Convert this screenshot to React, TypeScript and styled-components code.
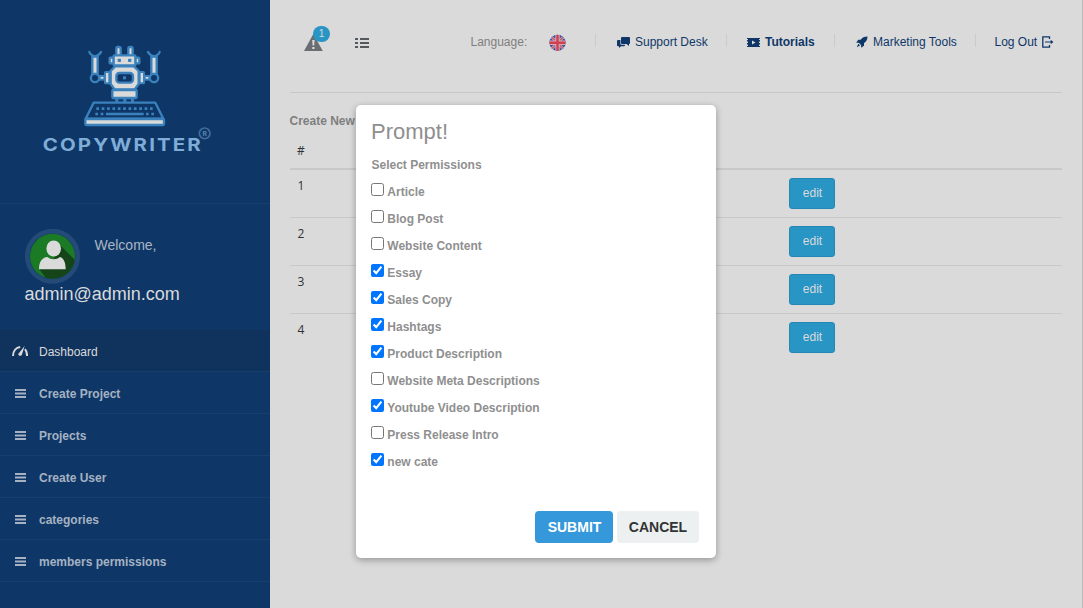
import React from 'react';
import styled, { createGlobalStyle, css } from 'styled-components';

const GlobalStyle = createGlobalStyle`
  * { box-sizing: border-box; }
  body {
    margin: 0;
    overflow: hidden;
    background: #dadada;
    font-family: "Liberation Sans", Arial, sans-serif;
    font-size: 12px;
    color: #7f7f7f;
  }
`;

const Page = styled.div`
  display: flex;
  width: 1083px;
  height: 608px;
  position: relative;
  background: #dadada;
  border-right: 1px solid #bcbcbc;
`;

const Sidebar = styled.aside`
  width: 270px;
  flex: none;
  background: #0e3768;
  display: flex;
  flex-direction: column;
`;

const LogoArea = styled.div`
  height: 204px;
  padding: 30px 0 0 30px;
  border-bottom: 1px solid #163f6e;
`;

const Profile = styled.section`
  height: 126px;
  padding: 25px 0 0 24px;
`;

const ProfileTop = styled.div`
  display: flex;
  height: 55px;
`;

const Avatar = styled.div`
  width: 57px;
  height: 57px;
`;

const Welcome = styled.span`
  margin: 8px 0 0 13.5px;
  font-size: 14px;
  line-height: 16px;
  color: #aab5c2;
`;

const Email = styled.div`
  padding-left: 0.5px;
  font-size: 18px;
  line-height: 20px;
  color: #dadada;
`;

const Nav = styled.nav`
  display: flex;
  flex-direction: column;
`;

const NavItem = styled.a<{ $active?: boolean }>`
  display: flex;
  align-items: center;
  height: 42px;
  padding: 2px 0 0 12px;
  border-bottom: 1px solid #163f6e;
  font-weight: 700;
  color: #a6b2c1;
  ${p => p.$active && css`
    background: #10335e;
    font-weight: 400;
    color: #dadada;
  `}
`;

const NavIcon = styled.span`
  display: flex;
  width: 27px;
  padding-bottom: 1px;
`;

const Content = styled.main`
  flex: 1;
  padding: 0 20px;
`;

const TopBar = styled.header`
  display: flex;
  justify-content: space-between;
  height: 93px;
  border-bottom: 1px solid #c8c8c8;
`;

const Tools = styled.div`
  display: flex;
  padding: 26px 0 0 14px;
`;

const AlertButton = styled.div`
  position: relative;
  width: 51px;
  height: 26px;
  padding-top: 8px;
`;

const Badge = styled.span`
  position: absolute;
  left: 9px;
  top: 0;
  width: 17px;
  height: 16px;
  border-radius: 8px;
  background: #2895c5;
  color: #dadada;
  font-size: 10px;
  line-height: 16px;
  text-align: center;
`;

const ListButton = styled.div`
  padding-top: 11px;
`;

const Links = styled.div`
  display: flex;
  padding: 34px 7px 0 0;
  height: 60px;
`;

const Language = styled.div`
  display: flex;
  width: 124.5px;
  justify-content: space-between;
  padding-right: 29px;
  line-height: 16px;
`;

const TopLink = styled.a<{ $width: number; $strong?: boolean; $indent?: number }>`
  display: flex;
  align-items: center;
  width: ${p => p.$width}px;
  height: 13px;
  border-left: 1px solid #cbcbcb;
  padding: 3px 0 0 ${p => p.$indent ?? 20}px;
  color: #0e3768;
  white-space: nowrap;
  font-weight: ${p => (p.$strong ? 700 : 400)};
  svg { flex: none; margin-right: 5px; }
`;

const LogOut = styled(TopLink)`
  svg { margin: 0 0 0 5px; }
`;

const Caption = styled.div`
  margin: 20px 0 0 -0.5px;
  height: 22px;
  line-height: 16px;
  font-weight: 700;
  font-size: 12px;
`;

const Table = styled.div`
  font-family: "Open Sans", sans-serif;
  font-size: 12px;
  color: #2f3338;
`;

const TableHead = styled.div`
  height: 35px;
  padding: 7px 7px;
  line-height: 18px;
  border-bottom: 2px solid #c8c8c8;
`;

const TableRow = styled.div`
  display: flex;
  justify-content: space-between;
  padding: 8px 227px 8px 7.5px;
  line-height: 16px;
  & + & { border-top: 1px solid #c8c8c8; }
`;

const EditButton = styled.button`
  width: 46px;
  height: 31px;
  padding: 0 0 2px 1px;
  border: 1px solid #2587b3;
  border-radius: 3px;
  background: #2895c5;
  color: #dadada;
  font: 12px "Liberation Sans", Arial, sans-serif;
`;

const Dialog = styled.div`
  position: absolute;
  left: 356px;
  top: 105px;
  width: 360px;
  height: 453px;
  border-radius: 5px;
  background: #fff;
  box-shadow: 0 2px 7px rgba(0, 0, 0, 0.33);
  padding: 14px 17px 15px 15px;
  display: flex;
  flex-direction: column;
  color: #8f8f8f;
`;

const DialogTitle = styled.h3`
  margin: 0;
  font-size: 22px;
  font-weight: 400;
  line-height: 25px;
`;

const DialogHint = styled.div`
  padding: 13px 0 0 0.5px;
  height: 32px;
  font-weight: 700;
  line-height: 16px;
`;

const Option = styled.label`
  display: flex;
  height: 27px;
  padding-top: 7px;
  font-weight: 700;
`;

const Check = styled.input`
  width: 13px;
  height: 13px;
  margin: 0 3.3px 0 0;
`;

const OptionText = styled.span`
  margin-top: 1px;
  line-height: 16px;
`;

const Actions = styled.div`
  display: flex;
  justify-content: flex-end;
  gap: 4px;
  margin-top: auto;
`;

const ActionButton = styled.button<{ $primary?: boolean }>`
  width: ${p => (p.$primary ? 78 : 82)}px;
  height: 32px;
  padding: 0 0 0 ${p => (p.$primary ? 1 : 0)}px;
  border: 0;
  border-radius: 4px;
  background: ${p => (p.$primary ? '#3498db' : '#ecf0f1')};
  color: ${p => (p.$primary ? '#fff' : '#333')};
  font: 700 14px "Liberation Sans", Arial, sans-serif;
`;

const blue = '#3b82bd';
const pale = '#dadada';

const Arm = () => (
  <g>
    <path d="M178 66Q181 75 195 79Q209 75 213 66" fill="none" stroke={blue} strokeWidth="7" strokeLinecap="round" />
    <rect x="187" y="80" width="16" height="52" fill={pale} stroke={blue} strokeWidth="7" />
    <circle cx="195" cy="144" r="12.5" fill="#0e3768" stroke={blue} strokeWidth="7" />
    <rect x="209" y="138" width="14" height="11" fill={pale} stroke={blue} strokeWidth="6" />
    <rect x="225" y="126" width="13" height="34" rx="2" fill={pale} stroke={blue} strokeWidth="6" />
  </g>
);

const Logo = () => (
  <svg width="200" height="140" viewBox="0 0 600 420">
    <Arm />
    <g transform="translate(567 0) scale(-1 1)"><Arm /></g>
    <g fill={pale} stroke={blue} strokeWidth="7">
      <rect x="259" y="51" width="13" height="26" rx="5" />
      <rect x="295" y="51" width="13" height="26" rx="5" />
      <rect x="239" y="83" width="12" height="17" rx="2" />
      <rect x="316" y="83" width="12" height="17" rx="2" />
      <rect x="251" y="76" width="65" height="30" rx="2" />
      <path d="M255 109H312L326 123V162L314 178H254L242 162V123Z" />
      <rect x="247" y="180" width="73" height="24" rx="2" />
    </g>
    <rect x="259" y="129" width="50" height="29" rx="9" fill="#0e3768" stroke={blue} strokeWidth="7" />
    <g fill={blue}>
      <rect x="263" y="86" width="10" height="10" rx="2" />
      <rect x="294" y="86" width="10" height="10" rx="2" />
      <rect x="279" y="139" width="9" height="9" />
      <rect x="256" y="205" width="9" height="14" />
      <rect x="280" y="205" width="9" height="14" />
      <rect x="303" y="205" width="9" height="14" />
    </g>
    <path d="M191 218H376L400 266H167Z" fill="none" stroke={blue} strokeWidth="7" strokeLinejoin="round" />
    <rect x="166" y="267" width="236" height="18" rx="3" fill={pale} stroke={blue} strokeWidth="7" />
    <path d="M199 236H370" stroke={blue} strokeWidth="8" strokeDasharray="8 8.1" />
    <path d="M196 252H220M348 252H374" stroke={blue} strokeWidth="8" strokeDasharray="8 8" />
    <path d="M228 252H341" stroke={blue} strokeWidth="8" />
    <g transform="translate(38 362) scale(1.18 1)">
      <text textLength="402" lengthAdjust="spacing" fontFamily="Inter, sans-serif" fontSize="52" fontWeight="700" fill="#7fadd8">COPYWRITER</text>
    </g>
    <circle cx="524" cy="310" r="16" fill="none" stroke="#426c9b" strokeWidth="5" />
    <text x="524" y="317" textAnchor="middle" fontFamily="Inter, sans-serif" fontSize="20" fontWeight="700" fill="#5a84b1">R</text>
  </svg>
);

const AvatarIcon = () => (
  <svg width="57" height="57" viewBox="0 0 57 57">
    <defs><clipPath id="disc"><circle cx="28.5" cy="27.3" r="22.5" /></clipPath></defs>
    <circle cx="28.5" cy="27.3" r="25.2" fill="none" stroke="#244a77" strokeWidth="4.6" />
    <g clipPath="url(#disc)">
      <rect width="57" height="57" fill="#1b7a24" />
      <path d="M35 15L57 37V57H28L15 40L30 30Z" fill="#144418" />
      <ellipse cx="29.7" cy="19.5" rx="7.3" ry="8" fill="#dadada" />
      <path d="M15 40.2C15 33 18 28.5 23.5 28C27 31 32 31 36 28C40 29 41.7 34 41.7 40.2Z" fill="#dadada" />
    </g>
  </svg>
);

const GaugeIcon = () => (
  <svg width="16" height="12" viewBox="0 0 16 12">
    <path d="M1 11C1 6 4 2.4 8.2 1.9M13 4.2C14.5 6 15.1 8.3 15.1 11" fill="none" stroke="#dadada" strokeWidth="2" />
    <path d="M12.6 1L10 9.6C9.4 11.4 6.7 11.2 6.4 9.4C6.3 8.5 6.8 7.9 7.4 7.4Z" fill="#dadada" />
  </svg>
);

const BarsIcon = () => (
  <svg width="14" height="9" viewBox="0 0 14 9">
    <path d="M3 1H14M3 4.5H14M3 8H14" stroke="#a6b2c1" strokeWidth="2" />
  </svg>
);

const WarningIcon = () => (
  <svg width="19" height="17" viewBox="0 0 19 17">
    <path d="M9.3 0L18.8 17H0Z" fill="#6a6e73" />
    <path d="M8.2 6H10.6L10.2 11.5H8.6ZM8.3 13H10.5V15H8.3Z" fill="#dadada" />
  </svg>
);

const ListIcon = () => (
  <svg width="14" height="10" viewBox="0 0 14 10">
    <path d="M0 1H3M0 5H3M0 9H3M5 1H14M5 5H14M5 9H14" stroke="#55595e" strokeWidth="2" />
  </svg>
);

const FlagIcon = () => (
  <svg width="17" height="17" viewBox="0 0 17 17">
    <defs><clipPath id="flag"><circle cx="8.5" cy="8.8" r="8.1" /></clipPath></defs>
    <g clipPath="url(#flag)">
      <rect width="17" height="17" fill="#43539b" />
      <path d="M0 0.3L17 17.3M17 0.3L0 17.3" stroke="#bcb4cb" strokeWidth="2.6" />
      <path d="M0 0.3L17 17.3M17 0.3L0 17.3" stroke="#cc5361" strokeWidth="1.2" />
      <path d="M8.5 0V17M0 8.8H17" stroke="#d9a9b4" strokeWidth="4.4" />
      <path d="M8.5 0V17M0 8.8H17" stroke="#cf4150" strokeWidth="2.4" />
    </g>
  </svg>
);

const ChatIcon = () => (
  <svg width="13" height="11" viewBox="0 0 13 11">
    <path d="M5 0H12Q13 0 13 1V6Q13 7 12 7V9L9.5 7H5Q4 7 4 6V1Q4 0 5 0Z" fill="#0e3768" />
    <path d="M1 3H3.4V7Q3.4 7.7 4.2 7.7H8Q8 9.2 7 9.2H4L2 11V9.2H1Q0 9.2 0 8.2V4Q0 3 1 3Z" fill="#0e3768" />
  </svg>
);

const VideoIcon = () => (
  <svg width="13" height="9" viewBox="0 0 13 9">
    <path d="M0 0H13V1H12V2H13V3.5H12V5H13V6.5H12V8H13V9H0V8H1V6.5H0V5H1V3.5H0V2H1V1H0Z" fill="#0e3768" />
    <path d="M5 2.5L8.5 4.5L5 6.5Z" fill="#dadada" />
  </svg>
);

const RocketIcon = () => (
  <svg width="12" height="12" viewBox="0 0 12 12">
    <path d="M11.5 0.5C8.2 0.5 6.3 1.6 4.7 3.8H2.2L0.2 6.8L2.8 6.8L5.2 9.2L5 11.8L8 9.8V7.2C10.5 5.5 11.5 3.5 11.5 0.5Z" fill="#0e3768" />
    <path d="M2.3 7.8L0.8 11.2L4.1 9.6Z" fill="#0e3768" />
  </svg>
);

const ExitIcon = () => (
  <svg width="12" height="12" viewBox="0 0 12 12">
    <path d="M7.5 3V0.8H0.8V11.2H7.5V9" fill="none" stroke="#0e3768" strokeWidth="1.3" />
    <path d="M3 5.5H8.7V3.8L11.4 6L8.7 8.2V6.5H3Z" fill="#0e3768" />
  </svg>
);

const navItems = ['Create Project', 'Projects', 'Create User', 'categories', 'members permissions'];

const permissions: [string, boolean][] = [
  ['Article', false],
  ['Blog Post', false],
  ['Website Content', false],
  ['Essay', true],
  ['Sales Copy', true],
  ['Hashtags', true],
  ['Product Description', true],
  ['Website Meta Descriptions', false],
  ['Youtube Video Description', true],
  ['Press Release Intro', false],
  ['new cate', true],
];

export default function App() {
  return (
    <>
      <GlobalStyle />
      <Page>
        <Sidebar>
          <LogoArea><Logo /></LogoArea>
          <Profile>
            <ProfileTop>
              <Avatar><AvatarIcon /></Avatar>
              <Welcome>Welcome,</Welcome>
            </ProfileTop>
            <Email>admin@admin.com</Email>
          </Profile>
          <Nav>
            <NavItem $active><NavIcon><GaugeIcon /></NavIcon>Dashboard</NavItem>
            {navItems.map(name => (
              <NavItem key={name}><NavIcon><BarsIcon /></NavIcon>{name}</NavItem>
            ))}
          </Nav>
        </Sidebar>
        <Content>
          <TopBar>
            <Tools>
              <AlertButton><WarningIcon /><Badge>1</Badge></AlertButton>
              <ListButton><ListIcon /></ListButton>
            </Tools>
            <Links>
              <Language>Language:<FlagIcon /></Language>
              <TopLink $width={131} $indent={21}><ChatIcon />Support Desk</TopLink>
              <TopLink $width={108} $strong><VideoIcon />Tutorials</TopLink>
              <TopLink $width={141} $indent={21}><RocketIcon />Marketing Tools</TopLink>
              <LogOut $width={80} $indent={18.5}>Log Out<ExitIcon /></LogOut>
            </Links>
          </TopBar>
          <Caption>Create New</Caption>
          <Table>
            <TableHead>#</TableHead>
            {[1, 2, 3, 4].map(id => (
              <TableRow key={id}>{id}<EditButton>edit</EditButton></TableRow>
            ))}
          </Table>
        </Content>
        <Dialog role="dialog">
          <DialogTitle>Prompt!</DialogTitle>
          <DialogHint>Select Permissions</DialogHint>
          {permissions.map(([name, checked]) => (
            <Option key={name}>
              <Check type="checkbox" defaultChecked={checked} />
              <OptionText>{name}</OptionText>
            </Option>
          ))}
          <Actions>
            <ActionButton $primary>SUBMIT</ActionButton>
            <ActionButton>CANCEL</ActionButton>
          </Actions>
        </Dialog>
      </Page>
    </>
  );
}
